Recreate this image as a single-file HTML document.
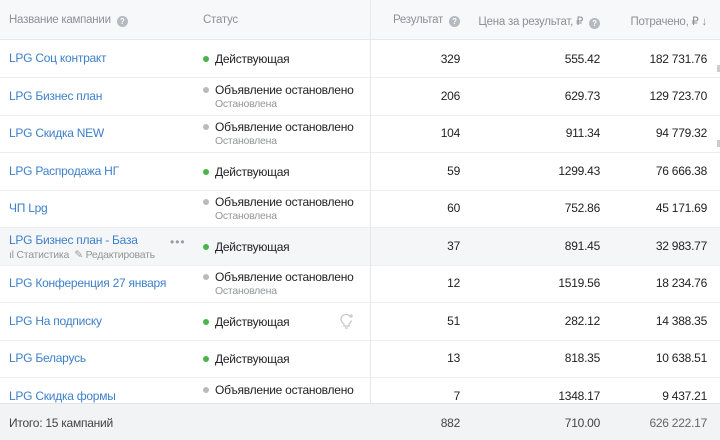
<!DOCTYPE html>
<html><head><meta charset="utf-8"><style>
*{margin:0;padding:0;box-sizing:border-box}
body{width:720px;height:440px;overflow:hidden;background:#fff;font-family:"Liberation Sans","DejaVu Sans",sans-serif;font-size:12px;letter-spacing:-0.25px;color:#222;position:relative}
.hdr{position:absolute;left:0;top:0;width:720px;height:40px;background:#f7f8fa;border-bottom:1px solid #e7e8ec;color:#8c9097;font-size:11.5px}
.hdr span{position:absolute;top:14px}
.q{display:inline-block;width:11px;height:11px;border-radius:50%;background:#b5b9c0;color:#fff;font-size:8px;line-height:11px;text-align:center;font-weight:bold;vertical-align:-1px;margin-left:3px;font-style:normal}
.row{position:absolute;left:0;width:720px;height:38px;border-bottom:1px solid #eceef1}
.name{position:absolute;left:9px;color:#3d7fc9;font-size:12px}
.st{position:absolute;left:203px;font-size:12px;color:#222}
.dot{display:inline-block;width:6px;height:6px;border-radius:50%;margin-right:6px;vertical-align:1px}
.g{background:#4bb34b}.s{background:#b8bbc0}
.sub{position:absolute;left:215px;font-size:10.5px;color:#939699}
.n{position:absolute;text-align:right;font-size:12px}
.c1{right:260px}.c2{right:120px}.c3{right:13px}
.vline{position:absolute;left:370px;top:0;width:1px;height:403px;background:#e7e8ec}
.foot{position:absolute;left:0;top:403px;width:720px;height:37px;background:#f2f3f5;border-top:1px solid #e3e4e8;color:#444}
.tick{position:absolute;left:717px;width:3px;height:7px;background:#ccc}
</style></head><body>
<div class="hdr">
<span style="left:9px">Название кампании <i class="q">?</i></span>
<span style="left:203px">Статус</span>
<span style="right:260px">Результат <i class="q">?</i></span>
<span style="right:120px">Цена за результат, ₽ <i class="q">?</i></span>
<span style="right:13px">Потрачено, ₽ ↓</span>
</div>

<div class="row" style="top:40px"><span class="name" style="top:11px">LPG Соц контракт</span><span class="st" style="top:12px"><i class="dot g"></i>Действующая</span><span class="n c1" style="top:12px">329</span><span class="n c2" style="top:12px">555.42</span><span class="n c3" style="top:12px">182 731.76</span></div>
<div class="row" style="top:78px"><span class="name" style="top:11px">LPG Бизнес план</span><span class="st" style="top:5px"><i class="dot s"></i>Объявление остановлено</span><span class="sub" style="top:20px">Остановлена</span><span class="n c1" style="top:11px">206</span><span class="n c2" style="top:11px">629.73</span><span class="n c3" style="top:11px">129 723.70</span></div>
<div class="row" style="top:115px"><span class="name" style="top:11px">LPG Скидка NEW</span><span class="st" style="top:5px"><i class="dot s"></i>Объявление остановлено</span><span class="sub" style="top:20px">Остановлена</span><span class="n c1" style="top:11px">104</span><span class="n c2" style="top:11px">911.34</span><span class="n c3" style="top:11px">94 779.32</span></div>
<div class="row" style="top:153px"><span class="name" style="top:11px">LPG Распродажа НГ</span><span class="st" style="top:12px"><i class="dot g"></i>Действующая</span><span class="n c1" style="top:11px">59</span><span class="n c2" style="top:11px">1299.43</span><span class="n c3" style="top:11px">76 666.38</span></div>
<div class="row" style="top:190px"><span class="name" style="top:11px">ЧП Lpg</span><span class="st" style="top:5px"><i class="dot s"></i>Объявление остановлено</span><span class="sub" style="top:20px">Остановлена</span><span class="n c1" style="top:11px">60</span><span class="n c2" style="top:11px">752.86</span><span class="n c3" style="top:11px">45 171.69</span></div>
<div class="row" style="top:228px;background:#f5f6f8"><span class="name" style="top:5px">LPG Бизнес план - База</span><span style="position:absolute;left:9px;top:21px;font-size:10.5px;color:#939699">ıl Статистика &nbsp;✎ Редактировать</span><span style="position:absolute;left:170px;top:7px;color:#99a;font-size:12px;letter-spacing:1px">•••</span><span class="st" style="top:12px"><i class="dot g"></i>Действующая</span><span class="n c1" style="top:11px">37</span><span class="n c2" style="top:11px">891.45</span><span class="n c3" style="top:11px">32 983.77</span></div>
<div class="row" style="top:265px"><span class="name" style="top:11px">LPG Конференция 27 января</span><span class="st" style="top:5px"><i class="dot s"></i>Объявление остановлено</span><span class="sub" style="top:20px">Остановлена</span><span class="n c1" style="top:11px">12</span><span class="n c2" style="top:11px">1519.56</span><span class="n c3" style="top:11px">18 234.76</span></div>
<div class="row" style="top:303px"><span class="name" style="top:11px">LPG На подписку</span><span class="st" style="top:12px"><i class="dot g"></i>Действующая</span><svg style="position:absolute;left:340px;top:10px" width="14" height="16" viewBox="0 0 14 16"><path d="M4 11c-2-1.5-3-3-3-5a5 5 0 0 1 9-2.5M4 11v2h5v-2c1-1 2-2 2.5-3.5M5 15h3" fill="none" stroke="#c2c5ca" stroke-width="1.2"/><path d="M11 1v4M9 3h4" stroke="#c2c5ca" stroke-width="1.2"/></svg><span class="n c1" style="top:11px">51</span><span class="n c2" style="top:11px">282.12</span><span class="n c3" style="top:11px">14 388.35</span></div>
<div class="row" style="top:340px"><span class="name" style="top:11px">LPG Беларусь</span><span class="st" style="top:12px"><i class="dot g"></i>Действующая</span><span class="n c1" style="top:11px">13</span><span class="n c2" style="top:11px">818.35</span><span class="n c3" style="top:11px">10 638.51</span></div>
<div class="row" style="top:378px;border:none"><span class="name" style="top:11px">LPG Скидка формы</span><span class="st" style="top:5px"><i class="dot s"></i>Объявление остановлено</span><span class="n c1" style="top:11px">7</span><span class="n c2" style="top:11px">1348.17</span><span class="n c3" style="top:11px">9 437.21</span></div>
<div class="vline"></div>
<div class="tick" style="top:65px"></div><div class="tick" style="top:140px"></div>
<div class="foot"><span style="position:absolute;left:9px;top:12px">Итого: 15 кампаний</span><span class="n c1" style="top:12px">882</span><span class="n c2" style="top:12px">710.00</span><span class="n c3" style="top:12px;color:#666">626 222.17</span></div>
</body></html>
